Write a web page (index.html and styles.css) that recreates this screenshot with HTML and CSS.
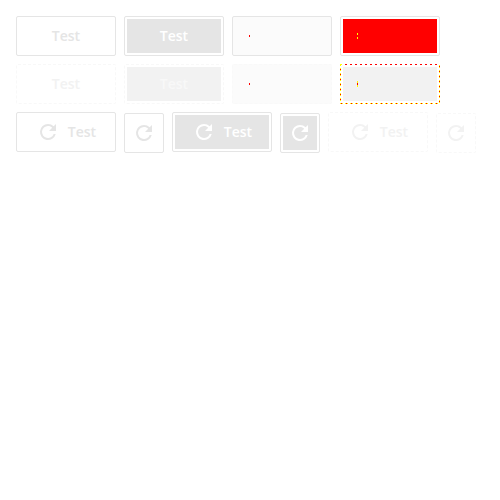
FILE: index.html
```
<!DOCTYPE html>
<html lang="en">
<head>
<meta charset="utf-8">
<title>Buttons</title>
<link rel="stylesheet" href="styles.css">
</head>
<body>
<svg class="defs" aria-hidden="true"><symbol id="refresh" viewBox="0 0 24 24"><path d="M17.65 6.35A7.96 7.96 0 0 0 12 4a8 8 0 1 0 7.73 10h-2.08A6 6 0 1 1 12 6c1.66 0 3.14.69 4.22 1.78L13 11h7V4z"/></symbol></svg>
<main>
<div class="row">
<button class="btn" type="button">Test</button>
<button class="btn solid" type="button">Test</button>
<button class="btn custom" type="button" aria-label="Custom"><span class="mark"></span></button>
<button class="btn solid custom" type="button" aria-label="Custom solid"><span class="mark split"></span></button>
</div>
<div class="row">
<button class="btn" type="button" disabled>Test</button>
<button class="btn solid" type="button" disabled>Test</button>
<button class="btn custom" type="button" aria-label="Custom" disabled><span class="mark"></span></button>
<button class="btn solid custom warn" type="button" aria-label="Custom solid" disabled><span class="mark split"></span></button>
</div>
<div class="row">
<button class="btn" type="button"><svg class="icon"><use href="#refresh"/></svg>Test</button>
<button class="btn square" type="button" aria-label="Refresh"><svg class="icon"><use href="#refresh"/></svg></button>
<button class="btn solid" type="button"><svg class="icon"><use href="#refresh"/></svg>Test</button>
<button class="btn solid square" type="button" aria-label="Refresh"><svg class="icon"><use href="#refresh"/></svg></button>
<button class="btn" type="button" disabled><svg class="icon"><use href="#refresh"/></svg>Test</button>
<button class="btn square" type="button" aria-label="Refresh" disabled><svg class="icon"><use href="#refresh"/></svg></button>
</div>
</main>
</body>
</html>
```
FILE: styles.css
```
* { box-sizing: border-box; }
body { margin: 0; background: #fff; }
main { display: flex; flex-direction: column; gap: 8px; padding: 16px; }
.defs { display: none; }
.row { display: flex; gap: 8px; }
.btn {
  display: flex;
  align-items: center;
  justify-content: center;
  flex: none;
  gap: 8px;
  min-width: 100px;
  height: 40px;
  padding: 2px;
  border: 1px solid #e5e5e5;
  border-radius: 2px;
  background: #fff content-box;
  color: #e5e5e5;
  font: 600 14px/20px "Open Sans", sans-serif;
}
.icon { width: 24px; height: 24px; fill: currentColor; }
.square { min-width: 40px; margin-top: 1px; }
.solid { background-color: #e5e5e5; color: #fff; }
.btn:disabled { border: 1px dashed #f8f8f8; color: #f2f2f2; }
.solid:disabled { background-color: #f2f2f2; color: #f8f8f8; }
.custom, .custom:disabled { justify-content: flex-start; padding-left: 16px; background: #fbfbfb border-box; }
.custom:disabled { border-color: #f9f9f9; }
.mark { width: 1px; height: 2px; background: #f00; }
.solid.custom { padding: 2px; background: #f00 content-box; }
.solid.custom .mark { margin-left: 14px; }
.split { height: 6px; background: linear-gradient(#ff0 2px, #f00 2px 4px, #ff0 4px); }

/* Two-colour dashes: plain red along the top, red with yellow ends elsewhere */
.warn.solid:disabled {
  border-color: transparent;
  border-radius: 0;
  background:
    linear-gradient(#ff0, #ff0) 0 0 / 2px 1px no-repeat border-box,
    repeating-linear-gradient(90deg, #f00 0 2px, transparent 2px 5px) 0 0 / 100% 1px no-repeat border-box,
    repeating-linear-gradient(90deg, #ff0 0 1px, #f00 1px 2px, #ff0 2px 3px, transparent 3px 5px) 0 100% / 100% 1px no-repeat border-box,
    repeating-linear-gradient(#f00 0 1px, #ff0 1px 2px, transparent 2px 4px, #ff0 4px 5px) 0 0 / 1px 100% no-repeat border-box,
    repeating-linear-gradient(transparent 0 1px, #ff0 1px 2px, #f00 2px 3px, #ff0 3px 4px, transparent 4px 5px) 100% 0 / 1px 100% no-repeat border-box,
    linear-gradient(#f2f2f2, #f2f2f2) content-box;
}
```
